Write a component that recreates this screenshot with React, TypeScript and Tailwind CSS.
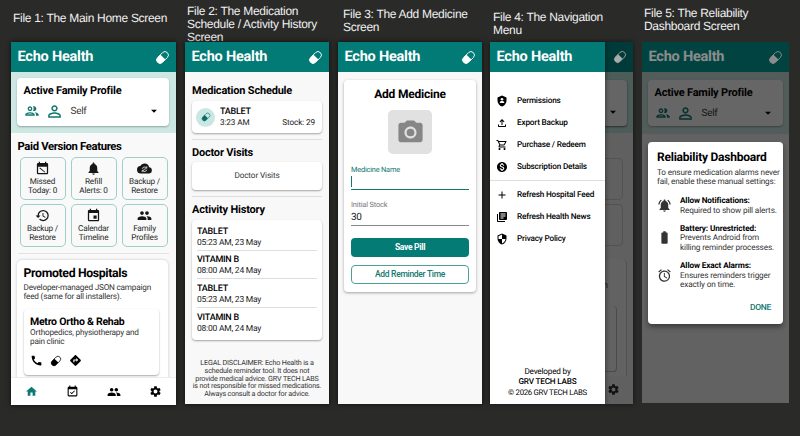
import type { ReactNode } from "react";
import clsx from "clsx";
import {
  MdAdd,
  MdAlarm,
  MdArrowDropDown,
  MdBatteryFull,
  MdCall,
  MdDirections,
  MdEvent,
  MdEventAvailable,
  MdGroup,
  MdHistory,
  MdHome,
  MdLibraryBooks,
  MdMonetizationOn,
  MdNotifications,
  MdNotificationsActive,
  MdOutlineFileUpload,
  MdOutlineGroup,
  MdOutlineShoppingCart,
  MdPermIdentity,
  MdPhotoCamera,
  MdSecurity,
  MdSettings,
} from "react-icons/md";

const PillIcon = ({ className }: { className?: string }) => (
  <svg viewBox="0 0 24 24" className={className} fill="none">
    <g transform="rotate(-45 12 12)">
      <rect x="1" y="6.5" width="22" height="11" rx="5.5" stroke="currentColor" strokeWidth="1.4" />
      <path d="M13 6.5H6.5a5.5 5.5 0 0 0 0 11H13z" fill="currentColor" />
    </g>
  </svg>
);

const MissedIcon = ({ className }: { className?: string }) => (
  <svg viewBox="0 0 24 24" className={className} fill="currentColor">
    <path d="M19 3h-1V1h-2v2H8V1H6v2H5a2 2 0 0 0-2 2v14a2 2 0 0 0 2 2h14a2 2 0 0 0 2-2V5a2 2 0 0 0-2-2zm0 16H5V9h14z" />
    <path d="M8 10.5l8.5 7-1 1-8.5-7z" />
  </svg>
);

const CloudSyncIcon = ({ className }: { className?: string }) => (
  <svg viewBox="0 0 24 24" className={className}>
    <path
      fill="currentColor"
      d="M19.35 10.04A7.49 7.49 0 0 0 12 4C9.11 4 6.6 5.64 5.35 8.04A6 6 0 0 0 6 20h13a5 5 0 0 0 .35-9.96z"
    />
    <path
      d="M8.3 12.5a4 4 0 0 1 6.800-1.600M15.700 8.600v2.800h-2.800M15.700 14a4 4 0 0 1-6.800 1.600M8.300 17.800V15h2.800M10.500 13.200h3"
      fill="none"
      stroke="#f8f9f8"
      strokeWidth="1.2"
    />
  </svg>
);

const PermissionsIcon = ({ className }: { className?: string }) => (
  <svg viewBox="0 0 24 24" className={className}>
    <path fill="currentColor" d="M12 1 3 5v6c0 5.55 3.84 10.74 9 12 5.16-1.26 9-6.45 9-12V5z" />
    <circle cx="12" cy="8.6" r="2.6" fill="#fff" />
    <path fill="#fff" d="M7.5 16v-1.200c0-2 2-3 4.500-3s4.500 1 4.500 3V16z" />
  </svg>
);

const Column = ({
  label,
  labelClass,
  className,
  children,
}: {
  label: string;
  labelClass: string;
  className: string;
  children: ReactNode;
}) => (
  <section className={clsx("flex shrink-0 flex-col", className)}>
    <h2
      className={clsx(
        "h-[42px] shrink-0 whitespace-pre font-['Liberation_Sans',sans-serif] text-[12px] leading-[13px] tracking-[-0.3px] text-[#f0f0f0]",
        labelClass,
      )}
    >
      {label}
    </h2>
    {children}
  </section>
);

const Header = ({ pill = true }: { pill?: boolean }) => (
  <header className="flex h-[30px] shrink-0 items-center justify-between bg-[#027b76] pl-[6.5px] pr-[6px] text-white">
    <span className="text-[14.5px] font-bold leading-none tracking-[-0.22px]">Echo Health</span>
    {pill && <PillIcon className="size-[15px]" />}
  </header>
);

const ProfileCard = ({ className }: { className?: string }) => (
  <div className={clsx("rounded-[4px] bg-white pl-[6.5px] pr-[8px] pt-[6px] shadow-[0_1px_2px_rgba(0,0,0,0.3)]", className)}>
    <h3 className="text-[11px] font-bold leading-[13px] tracking-[-0.2px]">Active Family Profile</h3>
    <div className="mt-[5px] flex h-[18px] items-center text-[#12786f]">
      <MdOutlineGroup className="size-[16px]" />
      <MdPermIdentity className="ml-[5px] size-[19px]" />
      <span className="ml-[7px] text-[10px] tracking-[-0.3px] text-[#3a3a3a]">Self</span>
      <MdArrowDropDown className="ml-auto size-[14px] text-black" />
    </div>
  </div>
);

const features = [
  { icon: MissedIcon, top: "Missed", bottom: "Today: 0" },
  { icon: MdNotifications, top: "Refill", bottom: "Alerts: 0" },
  { icon: CloudSyncIcon, top: "Backup /", bottom: "Restore" },
  { icon: MdHistory, top: "Backup /", bottom: "Restore" },
  { icon: MdEvent, top: "Calendar", bottom: "Timeline" },
  { icon: MdGroup, top: "Family", bottom: "Profiles" },
];

const HomeScreen = () => (
  <div className="flex h-[363px] flex-col overflow-hidden bg-[#f8f9f8] shadow-[0_0_5px_rgba(0,0,0,0.7)]">
    <Header />
    <div className="h-[61px] shrink-0 bg-[#cde8e3] pl-[6px] pr-[7px] pt-[6px]">
      <ProfileCard className="h-[48px]" />
    </div>
    <div className="flex h-[244px] shrink-0 flex-col overflow-hidden px-[7px] pt-[7px]">
      <h3 className="-ml-[0.5px] text-[11.3px] font-bold leading-[14px] tracking-[-0.35px]">Paid Version Features</h3>
      <div className="mt-[3px] grid grid-cols-3 gap-x-[5px] gap-y-[4px] px-[1.5px]">
        {features.map(({ icon: Icon, top, bottom }, i) => (
          <div
            key={i}
            className="flex h-[43px] flex-col items-center rounded-[5px] border border-[#9fcfc6] pt-[3px] text-center text-[8.2px] leading-[9px] tracking-[-0.2px] text-[#2a2a2a]"
          >
            <Icon className="mb-[2px] size-[15px] shrink-0 text-[#161616]" />
            <span>{top}</span>
            <span>{bottom}</span>
          </div>
        ))}
      </div>
      <div className="mt-[6px] h-px shrink-0 bg-[#e2e3e2]" />
      <div className="-ml-px mr-px mt-[6px] h-[140px] shrink-0 rounded-[5px] bg-white px-[6.5px] pt-[7px] shadow-[0_0_3px_rgba(0,0,0,0.22)]">
        <h3 className="text-[12.3px] font-bold leading-[15px] tracking-[-0.35px]">Promoted Hospitals</h3>
        <p className="mt-[2px] whitespace-nowrap text-[8.2px] leading-[9px] tracking-[-0.2px] text-[#333]">
          Developer-managed JSON campaign
          <br />
          feed (same for all installers).
        </p>
        <div className="mt-[7px] h-[66px] w-[135px] rounded-[4px] bg-white px-[6.5px] pt-[6px] shadow-[0_1px_2px_rgba(0,0,0,0.35)]">
          <h4 className="text-[10.5px] font-bold leading-[13px] tracking-[-0.25px]">Metro Ortho &amp; Rehab</h4>
          <p className="mt-[1px] whitespace-nowrap text-[8.2px] leading-[9px] tracking-[-0.2px] text-[#333]">
            Orthopedics, physiotherapy and
            <br />
            pain clinic
          </p>
          <div className="mt-[7px] flex items-center gap-[7px]">
            <MdCall className="size-[13px]" />
            <PillIcon className="size-[12px]" />
            <MdDirections className="size-[13px]" />
          </div>
        </div>
      </div>
    </div>
    <nav className="flex h-[28px] items-center justify-between border-t border-[#ececec] bg-white px-[14px]">
      <MdHome className="size-[13px] text-[#0a7a72]" />
      <MdEventAvailable className="size-[13px]" />
      <MdGroup className="size-[14px]" />
      <MdSettings className="size-[13px]" />
    </nav>
  </div>
);

const history = [
  { name: "TABLET", time: "05:23 AM, 23 May" },
  { name: "VITAMIN B", time: "08:00 AM, 24 May" },
  { name: "TABLET", time: "05:23 AM, 23 May" },
  { name: "VITAMIN B", time: "08:00 AM, 24 May" },
];

const disclaimer = [
  "LEGAL DISCLAIMER: Echo Health is a",
  "schedule reminder tool. It does not",
  "provide medical advice. GRV TECH LABS",
  "is not responsible for missed medications.",
  "Always consult a doctor for advice.",
];

const ScheduleScreen = () => (
  <div className="flex h-[362px] flex-col overflow-hidden bg-[#f8f8f8] shadow-[0_0_5px_rgba(0,0,0,0.7)]">
    <Header />
    <div className="flex flex-col px-[7px] pt-[12px]">
      <h3 className="text-[11px] font-bold leading-[13px] tracking-[-0.2px]">Medication Schedule</h3>
      <div className="mt-[4px] flex h-[32px] items-center rounded-[4px] bg-white pl-[4px] pr-[7px] shadow-[0_1px_2px_rgba(0,0,0,0.35)]">
        <span className="flex size-[19px] items-center justify-center rounded-full bg-[#c9e8e4]">
          <PillIcon className="size-[10px] text-[#0d6c68]" />
        </span>
        <div className="ml-[5px] flex-1 pt-[1px] text-[8.2px] leading-[11px] tracking-[-0.12px]">
          <p className="text-[9px] font-medium tracking-[-0.25px]">TABLET</p>
          <div className="flex justify-between text-[#222]">
            <span>3:23 AM</span>
            <span>Stock: 29</span>
          </div>
        </div>
      </div>
      <div className="mt-[6px] h-px bg-[#dedede]" />
      <h3 className="mt-[6px] text-[11px] font-bold leading-[13px] tracking-[-0.2px]">Doctor Visits</h3>
      <div className="mt-[3px] flex h-[28px] items-center justify-center rounded-[4px] bg-white text-[8.2px] tracking-[-0.12px] text-[#333] shadow-[0_1px_2px_rgba(0,0,0,0.35)]">
        Doctor Visits
      </div>
      <div className="mt-[6px] h-px bg-[#dedede]" />
      <h3 className="mt-[6px] text-[11px] font-bold leading-[13px] tracking-[-0.2px]">Activity History</h3>
      <div className="mt-[4px] h-[120px] rounded-[4px] bg-white px-[5px] pt-[2px] shadow-[0_1px_2px_rgba(0,0,0,0.35)]">
        {history.map(({ name, time }, i) => (
          <div
            key={i}
            className="h-[28.7px] border-b border-[#dedede] pt-[4.5px] text-[8.5px] leading-[11px] tracking-[-0.22px] text-[#222] last:border-0"
          >
            <p className="text-[9px] font-medium text-black">{name}</p>
            <p>{time}</p>
          </div>
        ))}
      </div>
    </div>
    <div className="mt-[19px] whitespace-nowrap text-center text-[7.2px] leading-[7.8px] tracking-[-0.17px] text-[#333]">
      {disclaimer.map((line) => (
        <p key={line}>{line}</p>
      ))}
    </div>
  </div>
);

const AddMedicineScreen = () => (
  <div className="flex h-[362px] flex-col overflow-hidden bg-[#f8f8f8] shadow-[0_0_5px_rgba(0,0,0,0.7)]">
    <Header />
    <div className="mx-[6px] mt-[8px] flex h-[212px] flex-col rounded-[4px] bg-white px-[7px] pt-[7px] shadow-[0_1px_3px_rgba(0,0,0,0.35)]">
      <h3 className="text-center text-[12px] font-bold leading-[15px] tracking-[-0.2px]">Add Medicine</h3>
      <div className="mt-[8px] flex size-[44px] items-center justify-center self-center rounded-[5px] bg-[#e1e1e1]">
        <MdPhotoCamera className="size-[29px] text-[#868686]" />
      </div>
      <label className="mt-[11px] text-[7.4px] leading-[9px] tracking-[-0.2px] text-[#12786f]">Medicine Name</label>
      <div className="mt-[2px] h-[14px] border-b border-[#12786f]">
        <div className="h-[11px] w-px bg-[#12786f]" />
      </div>
      <label className="mt-[10px] text-[7.4px] leading-[9px] tracking-[-0.15px] text-[#777]">Initial Stock</label>
      <div className="mt-[2px] h-[15px] border-b border-[#888] text-[10px] leading-[13px] tracking-[-0.3px] text-[#222]">30</div>
      <button className="mt-[12px] h-[19px] shrink-0 rounded-[4px] bg-[#057b76] text-[8.5px] font-bold tracking-[-0.3px] text-white">
        Save Pill
      </button>
      <button className="mt-[8px] h-[19px] shrink-0 rounded-[4px] border border-[#4f9f98] text-[8.5px] font-medium tracking-[-0.3px] text-[#12786f]">
        Add Reminder Time
      </button>
    </div>
  </div>
);

const menuTop = [
  { icon: PermissionsIcon, text: "Permissions" },
  { icon: MdOutlineFileUpload, text: "Export Backup" },
  { icon: MdOutlineShoppingCart, text: "Purchase / Redeem" },
  { icon: MdMonetizationOn, text: "Subscription Details" },
];

const menuBottom = [
  { icon: MdAdd, text: "Refresh Hospital Feed" },
  { icon: MdLibraryBooks, text: "Refresh Health News" },
  { icon: MdSecurity, text: "Privacy Policy" },
];

const MenuList = ({ items }: { items: typeof menuTop | typeof menuBottom }) => (
  <ul>
    {items.map(({ icon: Icon, text }) => (
      <li
        key={text}
        className="flex h-[21.8px] items-center whitespace-nowrap pl-[6px] text-[8.2px] font-medium tracking-[-0.18px]"
      >
        <Icon className="size-[12px] shrink-0" />
        <span className="ml-[9px]">{text}</span>
      </li>
    ))}
  </ul>
);

const MenuScreen = () => (
  <div className="flex h-[362px] overflow-hidden bg-[#5f605f] shadow-[0_0_5px_rgba(0,0,0,0.5)]">
    <div className="z-10 flex w-[115px] flex-col bg-white shadow-[1px_0_4px_rgba(0,0,0,0.4)]">
      <Header pill={false} />
      <div className="pt-[18.5px]">
        <MenuList items={menuTop} />
      </div>
      <div className="mt-[2px] h-px bg-[#dedede]" />
      <div className="mt-[3.5px]">
        <MenuList items={menuBottom} />
      </div>
      <div className="mb-[6px] mt-auto text-center text-[8.2px] leading-[10.3px] tracking-[-0.2px]">
        <p>Developed by</p>
        <p className="font-medium">GRV TECH LABS</p>
        <p className="text-[7.8px] tracking-[-0.3px]">© 2026 GRV TECH LABS</p>
      </div>
    </div>
    {/* dimmed home screen behind the drawer */}
    <div className="flex flex-1 flex-col items-start">
      <div className="flex h-[30px] w-full items-center justify-end bg-[#013b39] pr-[6px] text-[#aaa]">
        <PillIcon className="size-[14px]" />
      </div>
      <div className="h-[61px] w-full bg-[#4c5c59] pt-[8px]">
        <div className="flex h-[46px] w-[22px] items-end rounded-r-[4px] bg-[#656565] pb-[7px] pl-px shadow-[0_1px_2px_rgba(0,0,0,0.5)]">
          <MdArrowDropDown className="size-[14px]" />
        </div>
      </div>
      <div className="mt-[25px] h-[42px] w-[18px] rounded-r-[5px] border border-l-0 border-[#505352]" />
      <div className="mt-[4px] h-[42px] w-[18px] rounded-r-[5px] border border-l-0 border-[#505352]" />
      <div className="mt-[13px] h-[117px] w-[22px] rounded-tr-[5px] border-r border-[#525252] bg-[#626262] pt-[22px]">
        <p className="-ml-[2px] text-[9px] leading-[11px] text-[#181818]">n</p>
        <div className="mt-[14px] h-[66px] w-[12px] rounded-r-[4px] border-b border-r border-[#4b4b4b]" />
      </div>
      <MdSettings className="ml-[2px] mt-[7px] size-[13px] text-[#111]" />
    </div>
  </div>
);

const reliability = [
  {
    icon: MdNotificationsActive,
    title: "Allow Notifications:",
    lines: ["Required to show pill alerts."],
    pad: "pt-[1px]",
    gap: "mb-[9px]",
  },
  {
    icon: MdBatteryFull,
    title: "Battery: Unrestricted:",
    lines: ["Prevents Android from", "killing reminder processes."],
    pad: "pt-[5px]",
    gap: "mb-[9px]",
  },
  {
    icon: MdAlarm,
    title: "Allow Exact Alarms:",
    lines: ["Ensures reminders trigger", "exactly on time."],
    pad: "pt-[6px]",
    gap: "",
  },
];

const ReliabilityScreen = () => (
  <div className="relative h-[361px] overflow-hidden bg-[#f5f6f5]">
    <Header />
    <div className="h-[62px] bg-[#cde8e3] px-[6px] pt-[8px]">
      <ProfileCard className="h-[46px]" />
    </div>
    <div className="absolute inset-0 flex flex-col">
      <div className="h-[30px] bg-black/45" />
      <div className="flex-1 bg-black/60 px-[6px] pt-[70px]">
        <div className="h-[182px] rounded-[4px] bg-white px-[9px] pt-[8px] shadow-[0_3px_5px_rgba(0,0,0,0.4)]">
          <h3 className="whitespace-nowrap text-[12px] font-bold leading-[15px] tracking-[-0.23px]">
            Reliability Dashboard
          </h3>
          <p className="mt-[4px] whitespace-nowrap text-[8.2px] leading-[9.3px] tracking-[-0.15px] text-[#333]">
            To ensure medication alarms never
            <br />
            fail, enable these manual settings:
          </p>
          <div className="mt-[9.5px]">
            {reliability.map(({ icon: Icon, title, lines, pad, gap }) => (
              <div
                key={title}
                className={clsx(
                  "flex whitespace-nowrap text-[8.2px] leading-[9.4px] tracking-[-0.13px] text-[#333]",
                  gap,
                )}
              >
                <div className={clsx("w-[23px] shrink-0", pad)}>
                  <Icon className="size-[15px]" />
                </div>
                <div>
                  <p className="font-bold text-black">{title}</p>
                  {lines.map((line) => (
                    <p key={line}>{line}</p>
                  ))}
                </div>
              </div>
            ))}
          </div>
          <p className="mt-[12px] pr-[3px] text-right text-[8.5px] font-medium tracking-[-0.3px] text-[#12786f]">DONE</p>
        </div>
      </div>
    </div>
  </div>
);

export default function App() {
  return (
    <main className="flex h-[436px] w-[800px] overflow-hidden bg-[#2a2a29] pl-[11px] font-['Roboto',sans-serif] text-black [text-rendering:geometricPrecision]">
      <Column className="w-[165px]" labelClass="pl-[2px] pt-[12px]" label="File 1: The Main Home Screen">
        <HomeScreen />
      </Column>
      <Column
        className="ml-[9px] w-[144px]"
        labelClass="pl-[2px] pt-[5px]"
        label={"File 2: The Medication\nSchedule / Activity History\nScreen"}
      >
        <ScheduleScreen />
      </Column>
      <Column className="ml-[9px] w-[144px]" labelClass="pl-[5px] pt-[8px]" label={"File 3: The Add Medicine\nScreen"}>
        <AddMedicineScreen />
      </Column>
      <Column className="ml-[8px] w-[143px]" labelClass="pl-[3px] pt-[11px]" label={"File 4: The Navigation\nMenu"}>
        <MenuScreen />
      </Column>
      <Column
        className="ml-[9px] w-[147px]"
        labelClass="pl-[2px] pt-[7px]"
        label={"File 5: The Reliability\nDashboard Screen"}
      >
        <ReliabilityScreen />
      </Column>
    </main>
  );
}
